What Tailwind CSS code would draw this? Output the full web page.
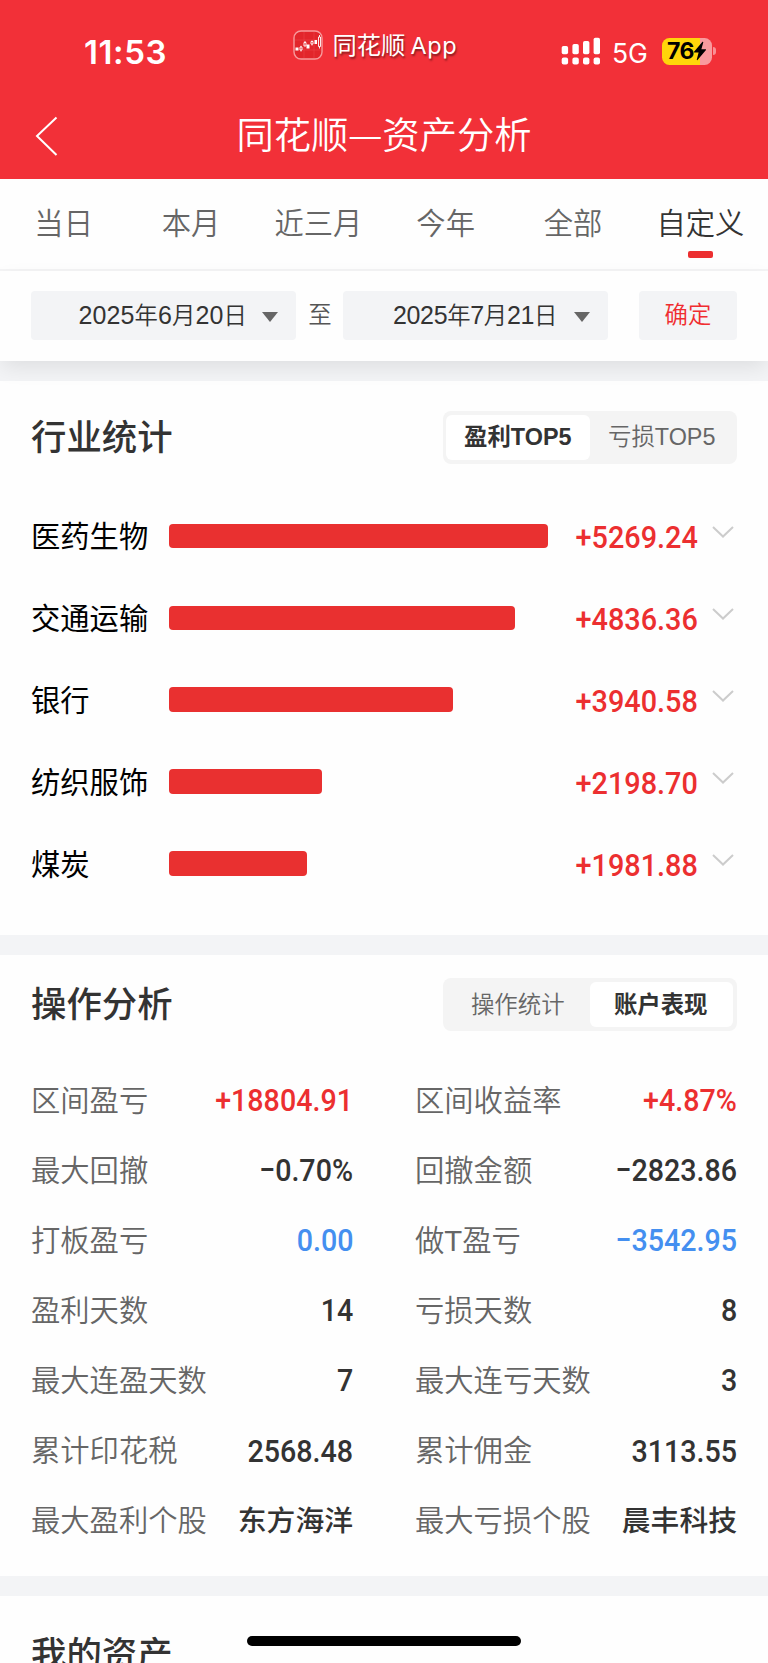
<!DOCTYPE html>
<html lang="zh-CN">
<head>
<meta charset="utf-8">
<meta name="viewport" content="width=device-width, initial-scale=1">
<title>同花顺—资产分析</title>
<script src="https://cdn.jsdelivr.net/npm/@tailwindcss/browser@4"></script>
</head>
<body class="bg-white font-['Liberation_Sans','Noto_Sans_CJK_SC',sans-serif] text-[#333]">
<div class="relative flex h-[1663px] w-[768px] flex-col overflow-hidden bg-[#fefefe]">

  <!-- status bar and title -->
  <header class="h-[179px] shrink-0 bg-[#f23038] text-white">
    <div class="flex h-[92px] items-start">
      <div class="mt-[32px] ml-[84px] w-[209px] font-[Inter] text-[33px] leading-[40px] font-semibold tracking-[0.6px]">11:53</div>
      <div class="mt-[29px] flex h-[31px] w-[268px] items-center">
        <svg class="size-[30px] shrink-0" viewBox="0 0 30 30" fill="none">
          <rect x="1" y="1" width="28" height="28" rx="7" fill="#e2252b" stroke="#f79a9c" stroke-width="1.4"/>
          <path d="M2 10h26M2 20h26M11 2v26M21 2v26" stroke="#ee4a4c" stroke-width=".5"/>
          <path d="M2.5 17.500h3v3h-3zM13.500 14.500h3v4h-3zM21.500 10h2.500v4h-2.500z" fill="#fff"/>
          <path d="M7 17h2v3h-2zM8 15.800v1.200M8 20v1.500M11 12.500h2v3.500h-2zM12 11v1.500M18 11.500h2v2.500h-2zM19 10.500v1M19 14v1.500M25.500 7h2v9.500h-2zM26.500 5v2M26.500 16.500v2" stroke="#fff" stroke-width=".9"/>
        </svg>
        <div class="mt-[2px] ml-[9.500px] font-[Inter,'Noto_Sans_CJK_SC',sans-serif] text-[24.300px] leading-[30px] whitespace-nowrap [text-shadow:1px_2px_2px_rgb(0_0_0/0.45)]">同花顺<span class="ml-[5px] text-[23.500px] tracking-[0.6px]">App</span></div>
      </div>
      <svg class="mt-[37px] h-[28px] w-[40px]" viewBox="0 0 40 28" fill="#fff">
        <rect x=".7" y="9" width="6.400" height="8.300" rx="1.800"/><rect x="11.400" y="7" width="6.400" height="10.300" rx="1.800"/><rect x="22" y="4" width="6.400" height="13.300" rx="1.800"/><rect x="32.600" y=".7" width="6.400" height="16.600" rx="1.800"/>
        <rect x=".7" y="20.500" width="6.400" height="7" rx="2"/><rect x="11.400" y="20.500" width="6.400" height="7" rx="2"/><rect x="22" y="20.500" width="6.400" height="7" rx="2"/><rect x="32.600" y="20.500" width="6.400" height="7" rx="2"/>
      </svg>
      <div class="mt-[36.500px] ml-[11px] w-[50px] font-[Inter] text-[26.500px] leading-[32px]">5G</div>
      <div class="mt-[37.500px] flex h-[27px] items-center">
        <div class="flex h-[27px] w-[49.500px] items-center overflow-hidden rounded-[7.500px] bg-linear-to-r from-[#ffd60a] from-[76%] to-[#f99a9e] to-[76%] pl-[5px] text-black">
          <span class="font-[Inter] text-[23px] leading-[27px] font-bold tracking-[-0.5px]">76</span>
          <svg class="-ml-px h-[20px] w-[14px] shrink-0" viewBox="0 0 14 20"><path d="M9.500 .8 1 10.800q-.4.7.4.700h4.200L3.800 18.500q-.1 1 .7.400L13 9q.4-.8-.4-.8H8.400L10.300 1.300q.1-1-.8-.5z"/></svg>
        </div>
        <div class="ml-[1.700px] h-[8px] w-[3px] rounded-r-full bg-[#f98f94]"></div>
      </div>
    </div>
    <div class="relative flex h-[88px] items-center justify-center">
      <svg class="absolute top-[24px] left-[35px] h-[40px] w-[23px]" viewBox="0 0 23 40" fill="none" stroke="#fff" stroke-width="2"><path d="M21.500 1.500 2 20 21.500 39"/></svg>
      <h1 class="flex items-center text-[37.300px] leading-[48px] font-[350]"><span>同花顺</span><span class="w-[34px] text-center text-[31px]">—</span><span>资产分析</span></h1>
    </div>
  </header>

  <!-- period tabs -->
  <nav class="grid h-[92px] w-full shrink-0 grid-cols-6 border-b-2 border-[#f4f4f5] pr-[4px] text-center text-[29.300px] leading-[44px] font-[350] text-[#666]">
    <div class="pt-[23px]">当日</div>
    <div class="pt-[23px]">本月</div>
    <div class="pt-[23px]">近三月</div>
    <div class="pt-[23px]">今年</div>
    <div class="pt-[23px]">全部</div>
    <div class="flex flex-col items-center pt-[23px] text-[#333]"><span>自定义</span><span class="mt-[5px] h-[6.600px] w-[25px] rounded-[2px] bg-[#ec2f30]"></span></div>
  </nav>

  <!-- date range -->
  <div class="relative z-10 flex h-[90px] shrink-0 items-start bg-[#fefefe] pt-[20px] pl-[31px] text-[23.400px] leading-[48px] shadow-[0_8px_20px_-2px_rgb(0_0_0/0.09)]">
    <div class="flex h-[49px] w-[265px] items-center rounded-[4px] bg-[#f3f4f6] pl-[47.500px] font-[350]">
      <span class="w-[183.500px] whitespace-nowrap tracking-[0.1px]"><span class="text-[25px]">2025</span>年<span class="text-[25px]">6</span>月<span class="text-[25px]">20</span>日</span>
      <svg class="mt-[2px] h-[10px] w-[16px]" viewBox="0 0 16 10"><path d="M0 0h16L8 10z" fill="#666"/></svg>
    </div>
    <div class="w-[47px] pl-px text-center font-[350] text-[#555]">至</div>
    <div class="flex h-[49px] w-[265px] items-center rounded-[4px] bg-[#f3f4f6] pl-[50px] font-[350]">
      <span class="w-[181px] whitespace-nowrap tracking-[-0.35px]"><span class="text-[25px]">2025</span>年<span class="text-[25px]">7</span>月<span class="text-[25px]">21</span>日</span>
      <svg class="mt-[2px] h-[10px] w-[16px]" viewBox="0 0 16 10"><path d="M0 0h16L8 10z" fill="#666"/></svg>
    </div>
    <div class="ml-[31px] h-[49px] w-[98px] rounded-[4px] bg-[#f3f4f6] text-center font-[350] text-[#f02d30]">确定</div>
  </div>

  <div class="h-[19.500px] shrink-0 bg-[#f3f4f6]"></div>

  <!-- industry statistics -->
  <section class="h-[554.500px] shrink-0 pt-[30.500px] pr-[31px] pl-[31px]">
    <div class="flex h-[53px] items-center justify-between">
      <h2 class="text-[35.400px] leading-[50px] font-medium">行业统计</h2>
      <div class="flex h-[53px] w-[294.500px] rounded-[8px] bg-[#f4f4f4] p-[3.800px] text-center text-[23.400px] leading-[45px]">
        <div class="w-[144px] rounded-[6px] bg-white pr-px font-bold">盈利TOP5</div>
        <div class="w-[143px] font-[350] text-[#666]">亏损TOP5</div>
      </div>
    </div>
    <div class="mt-[31px] flex flex-col [&>div]:flex [&>div]:h-[81.900px] [&>div]:items-center [&>div>b]:w-[138px] [&>div>b]:pt-[3px] [&>div>b]:text-[29.300px] [&>div>b]:font-normal [&>div>b]:text-black [&>div>i]:h-[24.600px] [&>div>i]:rounded-[4px] [&>div>i]:bg-[#e93030] [&>div>em]:ml-auto [&>div>em]:origin-right [&>div>em]:scale-x-90 [&>div>em]:pt-[3px] [&>div>em]:font-[Roboto] [&>div>em]:text-[32px] [&>div>em]:font-medium [&>div>em]:text-[#ec2f30] [&>div>em]:not-italic [&_svg]:mr-[3px] [&_svg]:mb-[7px] [&_svg]:ml-[14px] [&_svg]:h-[12px] [&_svg]:w-[22px] [&_svg]:fill-none [&_svg]:stroke-[#ccc] [&_svg]:stroke-2">
      <div><b>医药生物</b><i style="width:379px"></i><em>+5269.24</em><svg viewBox="0 0 22 12"><path d="M1 1l10 9.500L21 1"/></svg></div>
      <div><b>交通运输</b><i style="width:345.500px"></i><em>+4836.36</em><svg viewBox="0 0 22 12"><path d="M1 1l10 9.500L21 1"/></svg></div>
      <div><b>银行</b><i style="width:284px"></i><em>+3940.58</em><svg viewBox="0 0 22 12"><path d="M1 1l10 9.500L21 1"/></svg></div>
      <div><b>纺织服饰</b><i style="width:153px"></i><em>+2198.70</em><svg viewBox="0 0 22 12"><path d="M1 1l10 9.500L21 1"/></svg></div>
      <div><b>煤炭</b><i style="width:138px"></i><em>+1981.88</em><svg viewBox="0 0 22 12"><path d="M1 1l10 9.500L21 1"/></svg></div>
    </div>
  </section>

  <div class="h-[20px] shrink-0 bg-[#f3f4f6]"></div>

  <!-- operation analysis -->
  <section class="h-[621px] shrink-0 pt-[23px] pr-[31px] pl-[31px]">
    <div class="flex h-[53px] items-center justify-between">
      <h2 class="text-[35.400px] leading-[50px] font-medium">操作分析</h2>
      <div class="flex h-[53px] w-[294.500px] rounded-[8px] bg-[#f4f4f4] p-[3.800px] text-center text-[23.400px] leading-[46px]">
        <div class="w-[144px] pr-px font-[350] text-[#666]">操作统计</div>
        <div class="h-[45.400px] w-[143px] rounded-[6px] bg-white pr-[2px] font-bold">账户表现</div>
      </div>
    </div>
    <dl class="mt-[33.500px] grid grid-cols-[322px_322px] gap-x-[62px] [&>div]:flex [&>div]:h-[70.100px] [&>div]:items-center [&>div]:justify-between [&_dt]:pt-[2px] [&_dt]:text-[29.300px] [&_dt]:font-[350] [&_dt]:text-[#666] [&_dd]:origin-right [&_dd]:scale-x-[.895] [&_dd]:pt-px [&_dd]:font-[Roboto] [&_dd]:text-[32px] [&_dd]:font-medium">
      <div><dt>区间盈亏</dt><dd class="text-[#ec2f30]">+18804.91</dd></div>
      <div><dt>区间收益率</dt><dd class="text-[#ec2f30]">+4.87%</dd></div>
      <div><dt>最大回撤</dt><dd>−0.70%</dd></div>
      <div><dt>回撤金额</dt><dd>−2823.86</dd></div>
      <div><dt>打板盈亏</dt><dd class="text-[#448ff0]">0.00</dd></div>
      <div><dt>做T盈亏</dt><dd class="text-[#448ff0]">−3542.95</dd></div>
      <div><dt>盈利天数</dt><dd>14</dd></div>
      <div><dt>亏损天数</dt><dd>8</dd></div>
      <div><dt>最大连盈天数</dt><dd>7</dd></div>
      <div><dt>最大连亏天数</dt><dd>3</dd></div>
      <div><dt>累计印花税</dt><dd>2568.48</dd></div>
      <div><dt>累计佣金</dt><dd>3113.55</dd></div>
      <div><dt>最大盈利个股</dt><strong class="pt-[3px] text-[28.800px] font-medium">东方海洋</strong></div>
      <div><dt>最大亏损个股</dt><strong class="pt-[3px] text-[28.800px] font-medium">晨丰科技</strong></div>
    </dl>
  </section>

  <div class="h-[20px] shrink-0 bg-[#f3f4f6]"></div>

  <!-- assets -->
  <section class="shrink-0 pt-[33.500px] pl-[31px]">
    <h2 class="text-[35.400px] leading-[50px] font-medium">我的资产</h2>
  </section>

  <!-- home indicator -->
  <div class="absolute top-[1636px] left-[247px] h-[10px] w-[274px] rounded-full bg-black"></div>
</div>
</body>
</html>
